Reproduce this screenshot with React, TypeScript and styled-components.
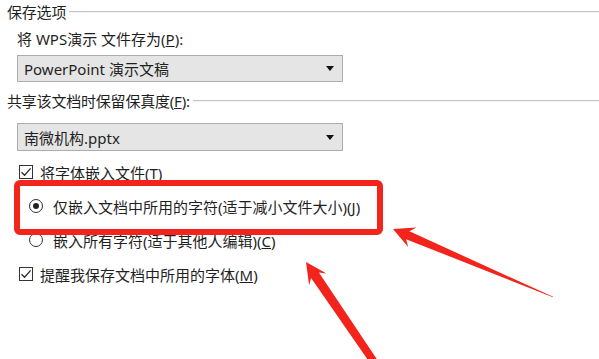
import styled, { createGlobalStyle } from "styled-components";

const GlobalStyle = createGlobalStyle`
  html, body {
    margin: 0;
    padding: 0;
    background: #ffffff;
  }
  body {
    font-family: "Noto Sans", "Noto Sans CJK SC", sans-serif;
    color: #1f1f1f;
  }
`;

const RED = "#f3241c";

type Pt = [number, number];

// long hand-drawn style arrow: head at tip, shaft tapering toward the tail
const arrowPoints = (tip: Pt, tail: Pt, neckWidth: number, tailWidth: number): string => {
  const dx = tail[0] - tip[0];
  const dy = tail[1] - tip[1];
  const len = Math.hypot(dx, dy);
  const ux = dx / len;
  const uy = dy / len;
  const px = -uy;
  const py = ux;
  const at = (along: number, side: number): Pt => [
    tip[0] + ux * along + px * side,
    tip[1] + uy * along + py * side,
  ];
  const pts: Pt[] = [
    tip,
    at(21, -10.5),
    at(16, -neckWidth / 2),
    at(len, -tailWidth / 2),
    at(len, tailWidth / 2),
    at(16, neckWidth / 2),
    at(21, 10.5),
  ];
  return pts.map((p) => `${p[0].toFixed(1)},${p[1].toFixed(1)}`).join(" ");
};

const App = (): JSX.Element => {
  return (
    <>
      <GlobalStyle />
      <Page>
        <GroupHeader $height={24}>
          <span>保存选项</span>
          <Rule />
        </GroupHeader>
        <FieldLabel>
          将 WPS演示 文件存为(<u>P</u>):
        </FieldLabel>
        <Select $height={27}>
          <span>PowerPoint 演示文稿</span>
          <Caret />
        </Select>

        <GroupHeader $height={38}>
          <span>
            共享该文档时保留保真度(<u>F</u>):
          </span>
          <Rule />
        </GroupHeader>
        <Select $height={28} $top={3}>
          <span>南微机构.pptx</span>
          <Caret />
        </Select>

        <OptionList>
          <OptionRow>
            <CheckBox>
              <CheckMark />
            </CheckBox>
            <span>
              将字体嵌入文件(<u>T</u>)
            </span>
          </OptionRow>
          <OptionRow $indent>
            <Radio $checked />
            <span>
              仅嵌入文档中所用的字符(适于减小文件大小)(<u>J</u>)
            </span>
          </OptionRow>
          <OptionRow $indent>
            <Radio />
            <span>
              嵌入所有字符(适于其他人编辑)(<u>C</u>)
            </span>
          </OptionRow>
          <OptionRow>
            <CheckBox>
              <CheckMark />
            </CheckBox>
            <span>
              提醒我保存文档中所用的字体(<u>M</u>)
            </span>
          </OptionRow>
        </OptionList>

        <Highlight />
        <Arrows width="599" height="359" viewBox="0 0 599 359">
          <polygon points={arrowPoints([393, 229], [553, 297], 8.5, 0.5)} fill={RED} />
          <polygon points={arrowPoints([306, 262], [402, 403], 9.5, 7)} fill={RED} />
        </Arrows>
      </Page>
    </>
  );
};

const CheckMark = () => (
  <svg width="12" height="12" viewBox="0 0 12 12">
    <path d="M1.5 6.2 L4.6 9.3 L10.6 2.4" fill="none" stroke="#2b2b2b" strokeWidth="1.3" />
  </svg>
);

export default App;

const Page = styled.div`
  position: relative;
  width: 599px;
  height: 359px;
  overflow: hidden;
  padding-left: 7px;
  box-sizing: border-box;
  display: flex;
  flex-direction: column;
  font-size: 15px;
`;

const GroupHeader = styled.div<{ $height: number }>`
  height: ${(p) => p.$height}px;
  display: flex;
  align-items: flex-end;
  gap: 3px;
  span {
    line-height: 24px;
    height: 24px;
    white-space: nowrap;
    letter-spacing: -0.2px;
  }
  padding-bottom: ${(p) => (p.$height > 24 ? 7 : 0)}px;
  box-sizing: border-box;
`;

const Rule = styled.div`
  flex: 1;
  height: 1px;
  margin-bottom: 12px;
  background: #c4c4c4;
  box-shadow: 0 1px 0 #f3f3f3;
`;

const FieldLabel = styled.div`
  height: 31px;
  line-height: 31px;
  margin-left: 10px;
  white-space: nowrap;
`;

const Select = styled.div<{ $height: number; $top?: number }>`
  margin-left: 10px;
  margin-top: ${(p) => p.$top ?? 0}px;
  width: 326px;
  height: ${(p) => p.$height}px;
  box-sizing: border-box;
  border: 1px solid #adadad;
  background: #e5e5e5;
  display: flex;
  align-items: center;
  justify-content: space-between;
  padding: 0 8px 0 6px;
  span {
    white-space: nowrap;
  }
`;

const Caret = styled.div`
  width: 0;
  height: 0;
  border-left: 4px solid transparent;
  border-right: 4px solid transparent;
  border-top: 5px solid #111;
`;

const OptionList = styled.div`
  margin-top: 4px;
  display: flex;
  flex-direction: column;
`;

const OptionRow = styled.div<{ $indent?: boolean }>`
  height: 34px;
  display: flex;
  align-items: center;
  padding-left: ${(p) => (p.$indent ? 22 : 12)}px;
  gap: ${(p) => (p.$indent ? 10 : 7)}px;
  white-space: nowrap;
`;

const CheckBox = styled.div`
  width: 14px;
  height: 14px;
  box-sizing: border-box;
  border: 1px solid #333;
  background: #fff;
  display: flex;
  align-items: center;
  justify-content: center;
`;

const Radio = styled.div<{ $checked?: boolean }>`
  width: 14px;
  height: 14px;
  box-sizing: border-box;
  border-radius: 50%;
  border: 1px solid #333;
  background: #fff;
  display: flex;
  align-items: center;
  justify-content: center;
  &::after {
    content: "";
    display: ${(p) => (p.$checked ? "block" : "none")};
    width: 6px;
    height: 6px;
    border-radius: 50%;
    background: #222;
  }
`;

const Highlight = styled.div`
  position: absolute;
  left: 14px;
  top: 180px;
  width: 369px;
  height: 55px;
  box-sizing: border-box;
  border: 6px solid ${RED};
  border-radius: 6px;
  pointer-events: none;
`;

const Arrows = styled.svg`
  position: absolute;
  left: 0;
  top: 0;
  pointer-events: none;
`;
